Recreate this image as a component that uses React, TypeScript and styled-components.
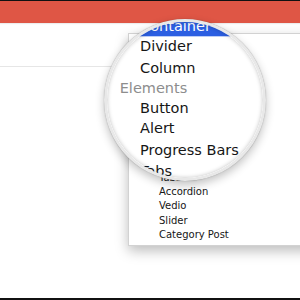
import React from 'react';
import styled, { createGlobalStyle } from 'styled-components';

const GlobalStyle = createGlobalStyle`
  html, body { margin: 0; padding: 0; background: #fff; }
  body { width: 300px; height: 300px; overflow: hidden; font-family: "DejaVu Sans", sans-serif; }
`;

const Frame = styled.div`
  position: relative;
  width: 300px;
  height: 300px;
  box-sizing: border-box;
  overflow: hidden;
  display: flex;
  flex-direction: column;
  background: #fff;
  border-bottom: 2px solid #111;
`;

const TopEdge = styled.div`
  flex: none;
  height: 1px;
  background: #111;
`;

const TopBar = styled.div`
  flex: none;
  height: 22px;
  background: #df5645;
  box-shadow: 0 1px 1px rgba(0, 0, 0, 0.07);
`;

const Toolbar = styled.div`
  flex: none;
  height: 43px;
  border-bottom: 1px solid #e6e6e6;
`;

const Menu = styled.ul`
  position: absolute;
  left: 128px;
  top: 33px;
  width: 200px;
  margin: 0;
  padding: 8.6px 0 3px;
  list-style: none;
  background: #fff;
  border: 1px solid #d2d2d2;
  border-right: none;
  box-shadow: 0 5px 12px rgba(0, 0, 0, 0.26);
  font-family: "DejaVu Sans", sans-serif;
  font-size: 10px;
`;

const Item = styled.li<{ $header?: boolean; $lit?: boolean }>`
  height: 14.25px;
  line-height: 14.25px;
  white-space: nowrap;
  padding-left: ${(p) => (p.$header ? 16 : 30)}px;
  color: ${(p) => (p.$lit ? '#fff' : p.$header ? '#8d8d8d' : '#161616')};
  background: ${(p) => (p.$lit ? '#2c5fe2' : 'transparent')};
`;

const Lens = styled.div`
  position: absolute;
  left: 104px;
  top: 19px;
  width: 156px;
  height: 156px;
  border: 3px solid #e8e8e8;
  border-radius: 50%;
  overflow: hidden;
  background: #fff;
  box-shadow: 0 4px 10px rgba(0, 0, 0, 0.24), 0 0 1px rgba(0, 0, 0, 0.35);
  z-index: 3;

  &::after {
    content: '';
    position: absolute;
    inset: 0;
    border-radius: 50%;
    box-shadow: inset 0 0 4px rgba(0, 0, 0, 0.26);
    pointer-events: none;
  }
`;

const Scene = styled.div<{ $zoom: number }>`
  position: absolute;
  left: -107px;
  top: -22px;
  width: 300px;
  height: 300px;
  background: #fff;
  transform: scale(${(p) => p.$zoom});
  transform-origin: 201.2px 193.2px;
`;

type Entry = { label: string; header?: boolean; active?: boolean };

const entries: Entry[] = [
  { label: 'Layout', header: true },
  { label: 'Row' },
  { label: 'Container', active: true },
  { label: 'Divider' },
  { label: 'Column' },
  { label: 'Elements', header: true },
  { label: 'Button' },
  { label: 'Alert' },
  { label: 'Progress Bars' },
  { label: 'Tabs' },
  { label: 'Accordion' },
  { label: 'Vedio' },
  { label: 'Slider' },
  { label: 'Category Post' },
];

const ElementMenu = ({ hover = false }: { hover?: boolean }) => (
  <Menu>
    {entries.map((e) => (
      <Item key={e.label} $header={e.header} $lit={hover && e.active}>
        {e.label}
      </Item>
    ))}
  </Menu>
);

export default function App() {
  return (
    <>
      <GlobalStyle />
      <Frame>
        <TopEdge />
        <TopBar />
        <Toolbar />
        <ElementMenu />
        <Lens>
          <Scene $zoom={1.45}>
            <ElementMenu hover />
          </Scene>
        </Lens>
      </Frame>
    </>
  );
}
